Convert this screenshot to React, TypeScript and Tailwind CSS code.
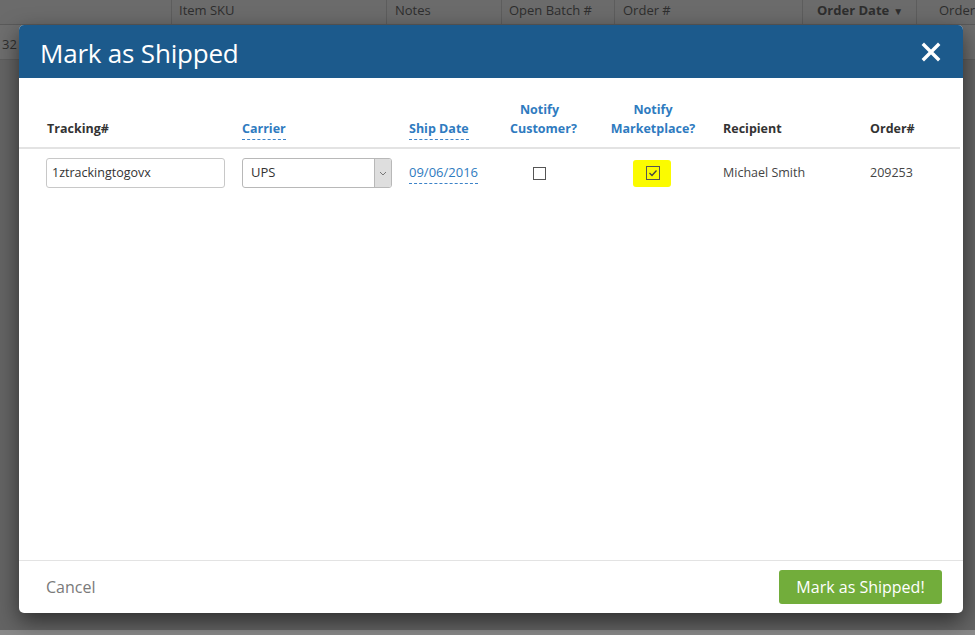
import React from "react";

const font = { fontFamily: '"Open Sans", "Liberation Sans", sans-serif' };

function Dotted({ children }: { children: React.ReactNode }) {
  return (
    <span className="border-b border-dashed border-[#3b82c8] pb-[2px] text-[#2f7bc0]">{children}</span>
  );
}

export default function App() {
  return (
    <div className="relative w-[975px] h-[635px] overflow-hidden bg-[#666666]" style={font}>
      {/* background page */}
      <div className="flex h-[25px] bg-[#6b6b6b] border-b border-[#5a5a5a] text-[13px] text-[#2e2e2e] leading-[18px]">
        <div className="w-[172px] border-r border-[#5d5d5d]" />
        <div className="w-[215px] border-r border-[#5d5d5d] pl-[7px] pt-[1px]">Item SKU</div>
        <div className="w-[115px] border-r border-[#5d5d5d] pl-[8px] pt-[1px]">Notes</div>
        <div className="w-[113px] border-r border-[#5d5d5d] pl-[7px] pt-[1px]">Open Batch #</div>
        <div className="w-[188px] border-r border-[#5d5d5d] pl-[8px] pt-[1px]">Order #</div>
        <div className="w-[114px] border-r border-[#5d5d5d] pl-[14px] pt-[1px] font-bold flex items-start gap-1">
          Order Date <span className="text-[10px] mt-[1px]">▼</span>
        </div>
        <div className="flex-1 pl-[22px] pt-[1px]">Order</div>
      </div>
      <div className="h-[35px] bg-[#6e6e6e] border-b border-[#5e5e5e] text-[13px] text-[#2e2e2e] pl-[2px] pt-[10px]">32</div>
      <div className="h-[570px] bg-[#646464]" />
      <div className="h-[5px] bg-[#8a8a8a]" />

      {/* modal */}
      <div className="absolute left-[19px] top-[25px] w-[944px] h-[588px] bg-white rounded-[5px] shadow-[0_8px_22px_rgba(0,0,0,0.55)] flex flex-col overflow-hidden">
        <div className="h-[53px] bg-[#1c5a8c] flex items-center justify-between pl-[21px] pr-[22px] shrink-0">
          <div className="text-white text-[26px] leading-none tracking-[-0.2px] mt-[2px]">Mark as Shipped</div>
          <svg width="20" height="20" viewBox="0 0 20 20">
            <path d="M3 3 L17 17 M17 3 L3 17" stroke="white" strokeWidth="3.4" strokeLinecap="square" />
          </svg>
        </div>

        <div className="flex-1 pr-[3px]">
          {/* table header */}
          <div className="h-[71px] border-b-2 border-[#e3e3e3] flex items-end pb-[9px] text-[12.5px] font-bold leading-[19px] text-[#333]">
            <div className="w-[223px] pl-[28px]">Tracking#</div>
            <div className="w-[167px]"><Dotted>Carrier</Dotted></div>
            <div className="w-[101px]"><Dotted>Ship Date</Dotted></div>
            <div className="w-[59px] text-center text-[#2f7bc0]">Notify<br />Customer?</div>
            <div className="w-[148px] text-center text-[#2f7bc0] pl-[20px]">Notify<br />Marketplace?</div>
            <div className="w-[153px] pl-[6px]">Recipient</div>
            <div className="flex-1">Order#</div>
          </div>
          {/* row */}
          <div className="h-[48px] flex items-center text-[12.5px] text-[#444]">
            <div className="w-[223px] pl-[27px]">
              <div className="w-[179px] h-[30px] border border-[#c8c8c8] rounded-[3px] flex items-center pl-[5px] text-[#333]">1ztrackingtogovx</div>
            </div>
            <div className="w-[167px]">
              <div className="w-[150px] h-[30px] border border-[#b8b8b8] rounded-[3px] flex items-center justify-between overflow-hidden text-[13px]">
                <span className="pl-[8px] text-[#333]">UPS</span>
                <div className="w-[17px] h-full bg-[#dedede] border-l border-[#b8b8b8] flex items-center justify-center">
                  <svg width="8" height="5" viewBox="0 0 8 5"><path d="M1 1 L4 4 L7 1" stroke="#777" strokeWidth="1" fill="none" /></svg>
                </div>
              </div>
            </div>
            <div className="w-[101px] text-[13px]"><Dotted>09/06/2016</Dotted></div>
            <div className="w-[59px] flex justify-center">
              <div className="w-[13px] h-[13px] border border-[#555] bg-white" />
            </div>
            <div className="w-[148px] flex justify-center pl-[17px]">
              <div className="w-[38px] h-[27px] bg-[#fbfb00] rounded-[3px] flex items-center justify-center pl-[3px]">
                <div className="w-[14px] h-[14px] border border-[#555] flex items-center justify-center">
                  <svg width="10" height="8" viewBox="0 0 10 8"><path d="M1.5 4 L4 6.5 L8.5 1.5" stroke="#444" strokeWidth="1.3" fill="none" /></svg>
                </div>
              </div>
            </div>
            <div className="w-[153px] pl-[6px]">Michael Smith</div>
            <div className="flex-1">209253</div>
          </div>
        </div>

        <div className="h-[53px] border-t border-[#e3e3e3] flex items-center justify-between pl-[27px] pr-[21px] shrink-0">
          <span className="text-[16px] text-[#7a7a7a]">Cancel</span>
          <button className="w-[163px] h-[34px] bg-[#72ad3b] rounded-[3px] text-white text-[16px]">Mark as Shipped!</button>
        </div>
      </div>
    </div>
  );
}
